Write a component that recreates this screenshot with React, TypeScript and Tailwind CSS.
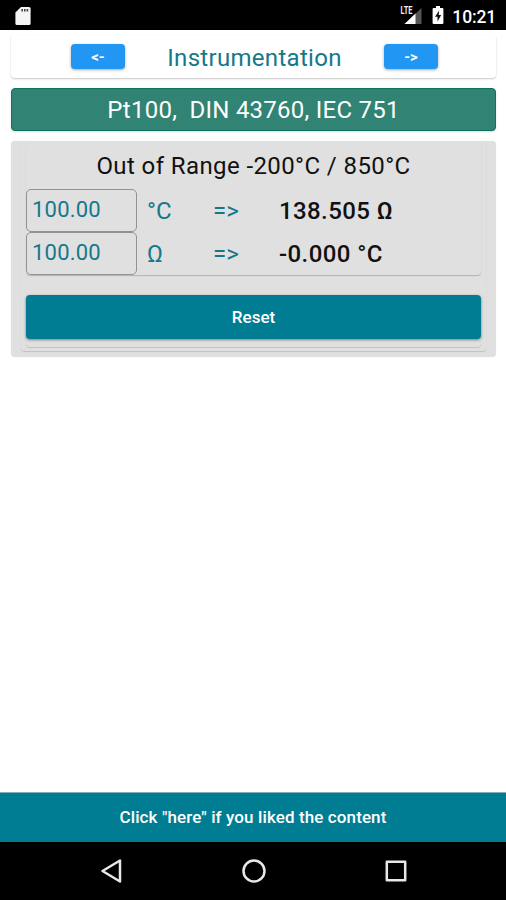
import React, { useState } from "react";

interface RowProps {
  value: string;
  onChange: (value: string) => void;
  unit: string;
  result: string;
}

/* Status bar: sd card, signal, battery and clock */
function StatusBar() {
  return (
    <header className="flex h-[30px] shrink-0 items-center justify-between bg-black pl-[15px] pr-[10px] text-white">
      <svg width="16" height="20" viewBox="0 0 16 20" className="mt-px">
        <path d="M6 1h8a1.6 1.6 0 0 1 1.6 1.6v14.8A1.6 1.6 0 0 1 14 19H2a1.6 1.6 0 0 1-1.6-1.6V6.5z" fill="#f5f5f5" />
        <path d="M7.2 3v2.6M9.8 3v2.6M12.4 3v2.6" stroke="#444" strokeWidth="1.6" />
      </svg>
      <div className="flex items-center">
        <svg width="22" height="20" viewBox="0 0 22 20">
          <path d="M21.5 3v16H4.5z" fill="#555" />
          <path d="M15.5 8.6V19h-11z" fill="#fff" />
          <path d="M0 0h13v9.5H0z" fill="#000" />
          <text
            x="0.5"
            y="8.5"
            fontSize="10"
            fontWeight="700"
            fontFamily="Roboto, sans-serif"
            fill="#eee"
            textLength="12"
            lengthAdjust="spacingAndGlyphs"
          >
            LTE
          </text>
        </svg>
        <svg width="12" height="20" viewBox="0 0 12 20" className="ml-[10px]">
          <path d="M4 1h4v2h2.4a1 1 0 0 1 1 1v14a1 1 0 0 1-1 1H1.6a1 1 0 0 1-1-1V4a1 1 0 0 1 1-1H4z" fill="#fff" />
          <path d="M7.2 5.5 3 11.8h2.5v4.7L9.2 10H6.7z" fill="#111" />
        </svg>
        <span className="ml-[8px] mt-[3px] text-[17.5px] leading-5 font-medium tracking-[-0.15px]">10:21</span>
      </div>
    </header>
  );
}

function NavButton({ label }: { label: string }) {
  return (
    <button
      type="button"
      className="h-[25px] w-[54px] rounded-[4px] bg-[#2196f3] text-[15px] leading-[26px] font-bold text-white shadow-[0_1px_3px_rgba(0,0,0,0.35)]"
    >
      {label}
    </button>
  );
}

function ConversionRow({ value, onChange, unit, result }: RowProps) {
  return (
    <div className="flex h-[43px] items-center text-[24px]">
      <input
        value={value}
        onChange={(e) => onChange(e.target.value)}
        className="h-[43px] w-[111px] rounded-[5px] border border-[#929292] bg-transparent pl-[5px] pb-[2px] text-[22px] tracking-[0.2px] text-[#15788a] outline-none"
      />
      <span className="ml-[10px] w-[66px] pt-px text-[#15788a]">{unit}</span>
      <span className="w-[66px] pt-px text-[#15788a]">=&gt;</span>
      <span className="pt-px font-medium tracking-[0.4px] text-[#111]">{result}</span>
    </div>
  );
}

export default function App() {
  const [celsius, setCelsius] = useState("100.00");
  const [ohms, setOhms] = useState("100.00");

  const handleReset = () => {
    setCelsius("100.00");
    setOhms("100.00");
  };

  return (
    <div className="flex h-[900px] w-[506px] flex-col overflow-hidden bg-white font-['Roboto','Liberation_Sans',sans-serif]">
      <StatusBar />

      <main className="flex-1 pl-[11px] pr-[10px] pt-[5px]">
        {/* Page title */}
        <div className="flex h-[43px] items-center justify-between rounded-[4px] bg-white pl-[60px] pr-[58px] shadow-[0_1px_2px_rgba(0,0,0,0.22)]">
          <NavButton label="<-" />
          <h1 className="pt-[2px] text-[24px] tracking-[0.3px] text-[#15788a]">Instrumentation</h1>
          <NavButton label="->" />
        </div>

        <h2 className="mt-[10px] flex h-[43px] items-center justify-center rounded-[4px] border border-[#11705f] bg-[#318374] pt-px text-[24px] tracking-[0.25px] whitespace-pre text-white shadow-[0_1px_2px_rgba(0,0,0,0.15)]">
          {"Pt100,  DIN 43760, IEC 751"}
        </h2>

        <section className="mt-[10px] h-[216px] rounded-[4px] bg-[#e0e0e0] px-[10px] pb-[6px] shadow-[0_0_1px_rgba(0,0,0,0.15)]">
          <div className="h-[210px] rounded-[4px] px-[5px] shadow-[0_1px_1px_rgba(0,0,0,0.14)]">
            <div className="h-[134px] rounded-[4px] shadow-[0_1px_1px_rgba(0,0,0,0.2)]">
              <p className="h-[48px] text-center text-[24px] leading-[50px] tracking-[0.4px] text-[#111]">
                Out of Range -200°C / 850°C
              </p>
              <ConversionRow value={celsius} onChange={setCelsius} unit="°C" result="138.505 Ω" />
              <ConversionRow value={ohms} onChange={setOhms} unit="Ω" result="-0.000 °C" />
            </div>
            <div className="mt-[20px] h-[52px] rounded-[4px] shadow-[0_1px_1px_rgba(0,0,0,0.14)]">
              <button
                type="button"
                onClick={handleReset}
                className="h-[44px] w-full rounded-[4px] bg-[#007d92] pt-px text-[17px] font-medium text-white shadow-[0_1px_3px_rgba(0,0,0,0.45)]"
              >
                Reset
              </button>
            </div>
          </div>
        </section>
      </main>

      <button
        type="button"
        className="h-[50px] shrink-0 border-t border-[#86adb5] bg-[#007d92] text-[17px] font-medium tracking-[0.11px] text-white"
      >
        Click "here" if you liked the content
      </button>

      {/* Android navigation */}
      <nav className="flex h-[58px] shrink-0 items-center justify-between bg-black pl-[99px] pr-[98px]">
        <svg width="24" height="24" viewBox="0 0 24 24" fill="none" stroke="#e8e8e8" strokeWidth="2.5" strokeLinejoin="round">
          <path d="M21 1.5v21L3.5 12z" />
        </svg>
        <svg width="24" height="24" viewBox="0 0 24 24" fill="none" stroke="#e8e8e8" strokeWidth="2.5">
          <circle cx="12" cy="12" r="10.5" />
        </svg>
        <svg width="24" height="24" viewBox="0 0 24 24" fill="none" stroke="#e8e8e8" strokeWidth="2.5" strokeLinejoin="round">
          <path d="M2.8 2.8h18.4v18.4H2.8z" />
        </svg>
      </nav>
    </div>
  );
}
